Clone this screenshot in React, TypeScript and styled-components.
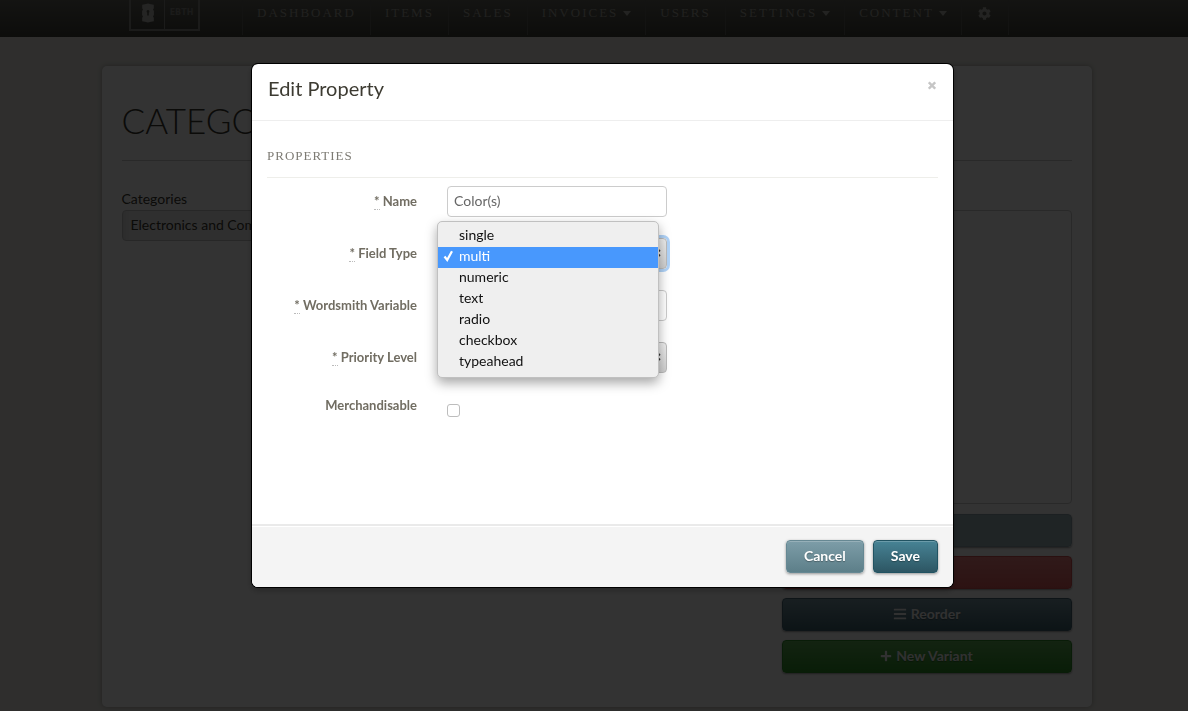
import React from "react";
import styled, { createGlobalStyle, css } from "styled-components";
import { FaBars, FaCog, FaPlus } from "react-icons/fa";

const sans = `Lato, "Open Sans", "Liberation Sans", sans-serif`;
const serif = `"Liberation Serif", "Times New Roman", serif`;

const GlobalStyle = createGlobalStyle`
  *, *::before, *::after { box-sizing: border-box; }
  html, body { margin: 0; height: 100%; }
  body {
    overflow: hidden;
    background: #e8e6df;
    font-family: ${sans};
    font-size: 14px;
    line-height: 20px;
    color: #3a382f;
  }
`;

/* ---------- Top navigation ---------- */

const NavBar = styled.header`
  height: 37px;
  background: linear-gradient(#64645c, #3f3f38);
`;

const NavInner = styled.div`
  display: flex;
  align-items: flex-start;
  max-width: 990px;
  margin: 0 auto;
  padding-left: 30px;
`;

const Logo = styled.a`
  display: flex;
  flex: none;
  width: 71px;
  height: 31px;
  margin-right: 42px;
  border: 2px solid #868682;
  border-top: 0;
  color: #b8b8b4;
  text-decoration: none;
`;

const LogoMark = styled.span`
  display: flex;
  justify-content: center;
  width: 34px;
  padding-top: 3px;
  border-right: 1px solid #868682;
`;

const LogoName = styled.span`
  flex: 1;
  color: #868682;
  text-align: center;
  font: bold 8px/26px "DejaVu Sans", sans-serif;
`;

const NavList = styled.ul`
  display: flex;
  margin: 0;
  padding: 0;
  list-style: none;
`;

const NavItem = styled.li`
  border-left: 1px solid #62625a;
  &:last-child { border-right: 1px solid #62625a; }
`;

const NavLink = styled.a`
  display: flex;
  align-items: center;
  gap: 5px;
  height: 35px;
  padding: 0 14px 9px;
  color: #a4a49c;
  font-family: ${serif};
  font-size: 13px;
  letter-spacing: 2px;
  text-transform: uppercase;
  text-decoration: none;
  white-space: nowrap;
`;

const IconNavLink = styled(NavLink)`
  padding: 0 17px 9px 16px;
`;

const Caret = styled.span`
  border: 4px solid transparent;
  border-top: 5px solid #b0b0a8;
  border-bottom: 0;
`;

/* ---------- Page behind the dialog ---------- */

const Shell = styled.div`
  padding-left: 5px;
`;

const Card = styled.main`
  max-width: 990px;
  height: 641px;
  margin: 29px auto 0;
  padding: 34px 20px 0;
  background: #fff;
  border-radius: 5px;
  box-shadow: 0 0 5px rgba(0, 0, 0, 0.3);
`;

const PageTitle = styled.h1`
  margin: 0;
  padding-bottom: 20px;
  border-bottom: 1px solid #ccc;
  font-size: 35px;
  font-weight: 300;
  line-height: 40px;
  text-transform: uppercase;
`;

const Columns = styled.div`
  display: grid;
  grid-template-columns: 290px 290px;
  justify-content: space-between;
  padding-top: 28px;
`;

const Stack = styled.div`
  display: flex;
  flex-direction: column;
`;

const PageLabel = styled.label`
  height: 21px;
`;

const CategorySelect = styled.select`
  appearance: none;
  height: 31px;
  padding: 0 8px 2px;
  border: 1px solid #c4c4c4;
  border-radius: 4px;
  background: linear-gradient(90deg, #dcdcdc, #ececec 8px);
  color: #3a382f;
  font: 14px/20px ${sans};
`;

const VariantList = styled.ul`
  height: 294px;
  margin: 21px 0 10px;
  padding: 0;
  list-style: none;
  border: 1px solid #ccc;
  border-radius: 4px;
`;

const tones = {
  slate: ["#9cb2ba", "#9cb2ba", "#8ba0a8"],
  red: ["#ee8080", "#dd5c5c", "#d05050"],
  navy: ["#7896a3", "#3f6470", "#456674"],
  green: ["#5fae55", "#2f9128", "#2f8a2c"],
  muted: ["#7d9da8", "#5d7f89", "#668893"],
  teal: ["#478395", "#2d5663", "#215362"],
} as const;

const Button = styled.button<{ $tone: keyof typeof tones; $faded?: boolean }>`
  display: flex;
  align-items: center;
  justify-content: center;
  gap: 4px;
  height: 33px;
  padding: 0 17px 2px;
  border: 1px solid ${(p) => tones[p.$tone][2]};
  border-radius: 4px;
  background: linear-gradient(${(p) => tones[p.$tone][0]}, ${(p) => tones[p.$tone][1]});
  box-shadow: inset 0 1px 0 rgba(255, 255, 255, 0.2), 0 1px 3px rgba(0, 0, 0, 0.4);
  color: #fff;
  font: bold 14px/20px ${sans};
  text-shadow: 0 1px 1px rgba(0, 0, 0, 0.3);
  ${(p) => p.$faded && css`
    margin-bottom: 9px;
    color: #f4f4f4;
    box-shadow: 0 1px 2px rgba(0, 0, 0, 0.4);
  `}
`;

/* ---------- Dialog ---------- */

const Backdrop = styled.div`
  position: fixed;
  inset: 0;
  padding: 64px 0 0 17px;
  background: rgba(0, 0, 0, 0.8);
`;

const Dialog = styled.div`
  display: flex;
  flex-direction: column;
  max-width: 701px;
  margin: 0 auto;
  border-radius: 6px;
  background: #fff;
  box-shadow: 0 0 0 1px #000, 0 3px 7px rgba(0, 0, 0, 0.3);
`;

const DialogHeader = styled.div`
  display: flex;
  align-items: flex-start;
  justify-content: space-between;
  height: 57px;
  padding: 9px 15px 0 16px;
  border-bottom: 1px solid #eee;
`;

const DialogTitle = styled.h2`
  margin: 0;
  color: #3d3b32;
  font-size: 20px;
  font-weight: 400;
  line-height: 30px;
`;

const CloseButton = styled.button`
  display: flex;
  margin-top: 8px;
  padding: 0 2px;
  border: 0;
  background: none;
  color: #c6c6c6;
`;

const DialogBody = styled.div`
  height: 403px;
  padding: 25px 15px 0;
`;

const Fieldset = styled.fieldset`
  margin: 0;
  padding: 0;
  border: 0;
`;

const Legend = styled.legend`
  width: 100%;
  margin-bottom: 8px;
  padding: 0 0 11px;
  border-bottom: 1px solid #eeeeea;
  color: #7d7b74;
  font-family: ${serif};
  font-size: 13px;
  line-height: 20px;
  letter-spacing: 1px;
  text-transform: uppercase;
`;

const FieldRow = styled.div<{ $compact?: boolean }>`
  display: grid;
  grid-template-columns: 150px 220px;
  column-gap: 30px;
  align-items: center;
  height: ${(p) => (p.$compact ? 24 : 30)}px;
  margin-bottom: 22px;
`;

const FieldLabel = styled.label`
  padding-bottom: 2px;
  color: #716d62;
  font-size: 13px;
  font-weight: 700;
  text-align: right;
  white-space: nowrap;
`;

const Required = styled.abbr`
  border-bottom: 1px dotted #bbb;
  text-decoration: none;
`;

const control = css`
  width: 100%;
  height: 31px;
  padding: 0 6px 2px;
  border: 1px solid #ccc;
  border-radius: 4px;
  color: #666;
  font: 14px/20px ${sans};
`;

const TextInput = styled.input`
  ${control}
  background: #fff;
`;

const SelectWrap = styled.div`
  position: relative;
`;

const SelectInput = styled.select<{ $active?: boolean }>`
  ${control}
  display: block;
  appearance: none;
  outline: none;
  border-color: #bbb;
  background: linear-gradient(#eee, #cfcfcf);
  box-shadow: ${(p) => (p.$active ? "0 0 0 3px #b0d3f8" : "none")};
`;

const SelectArrows = styled.svg`
  position: absolute;
  top: 9px;
  right: 6px;
  pointer-events: none;
`;

const CheckInput = styled.input`
  appearance: none;
  width: 13px;
  height: 13px;
  margin: 8px 0 0;
  border: 1px solid #bdbdbd;
  border-radius: 3px;
  background: #fff;
`;

const Menu = styled.ul`
  position: absolute;
  z-index: 1;
  top: -17px;
  left: -10px;
  width: 222px;
  margin: 0;
  padding: 4px 0;
  border: 1px solid #c0c0c0;
  border-radius: 5px;
  background: #efefef;
  box-shadow: 0 5px 12px rgba(0, 0, 0, 0.35);
  list-style: none;
`;

const MenuItem = styled.li<{ $selected: boolean }>`
  display: flex;
  align-items: center;
  height: 21px;
  padding: 0 0 3px 5px;
  background: ${(p) => (p.$selected ? "#4898fd" : "transparent")};
  color: ${(p) => (p.$selected ? "#fff" : "#111")};
  font-size: 14px;
`;

const CheckSlot = styled.span`
  display: flex;
  width: 16px;
`;

const DialogFooter = styled.div`
  display: flex;
  justify-content: flex-end;
  gap: 9px;
  padding: 14px 15px;
  border-top: 2px solid #eaeaea;
  border-radius: 0 0 6px 6px;
  background: #f4f4f4;
  box-shadow: inset 0 1px 0 #fff;
`;

const navItems = [
  { label: "Dashboard" },
  { label: "Items" },
  { label: "Sales" },
  { label: "Invoices", menu: true },
  { label: "Users" },
  { label: "Settings", menu: true },
  { label: "Content", menu: true },
];

const fieldTypes = ["single", "multi", "numeric", "text", "radio", "checkbox", "typeahead"];

function Arrows() {
  return (
    <SelectArrows width="7" height="12" viewBox="0 0 7 12" fill="none" stroke="#333" strokeWidth="1.6" aria-hidden>
      <path d="M1 4.4 3.5 1.6 6 4.4M1 7.6l2.5 2.8L6 7.6" />
    </SelectArrows>
  );
}

function RequiredLabel({ id, text }: { id: string; text: string }) {
  return (
    <FieldLabel htmlFor={id}>
      <Required title="required">*</Required> {text}
    </FieldLabel>
  );
}

export default function App() {
  return (
    <>
      <GlobalStyle />
      <NavBar>
        <NavInner>
          <Logo href="#">
            <LogoMark>
              <svg width="14" height="20" viewBox="0 0 14 20" fill="currentColor" aria-hidden>
                <path
                  fillRule="evenodd"
                  d="M4 1.2 7 .4l3 .8 2.800.6v3.400l-.8 1.300.9 1.500v4l-.9 1.500.8 1.300v3.400L10 18.800l-3 .8-3-.8-2.800-.6v-3.400l.8-1.300-.9-1.500V8L2 6.500l-.8-1.300V1.800zM7 7a1.500 1.500 0 0 0-.8 2.700V12.500h1.600V9.700A1.500 1.500 0 0 0 7 7z"
                />
              </svg>
            </LogoMark>
            <LogoName>EBTH</LogoName>
          </Logo>
          <NavList>
            {navItems.map((item) => (
              <NavItem key={item.label}>
                <NavLink href="#">
                  {item.label}
                  {item.menu && <Caret />}
                </NavLink>
              </NavItem>
            ))}
            <NavItem>
              <IconNavLink href="#" aria-label="Preferences">
                <FaCog size={13} color="#b0b0a8" />
              </IconNavLink>
            </NavItem>
          </NavList>
        </NavInner>
      </NavBar>

      <Shell>
        <Card>
          <PageTitle>Categories</PageTitle>
          <Columns>
            <Stack>
              <PageLabel htmlFor="category">Categories</PageLabel>
              <CategorySelect id="category">
                <option>Electronics and Computers</option>
              </CategorySelect>
            </Stack>
            <Stack>
              <VariantList />
              <Button $tone="slate" $faded>Edit</Button>
              <Button $tone="red" $faded>Delete</Button>
              <Button $tone="navy" $faded><FaBars size={14} /> Reorder</Button>
              <Button $tone="green" $faded><FaPlus size={12} /> New Variant</Button>
            </Stack>
          </Columns>
        </Card>
      </Shell>

      <Backdrop>
        <Dialog role="dialog" aria-modal="true" aria-labelledby="dialog-title">
          <DialogHeader>
            <DialogTitle id="dialog-title">Edit Property</DialogTitle>
            <CloseButton type="button" aria-label="Close">
              <svg width="8" height="9" viewBox="0 0 8 9" stroke="currentColor" strokeWidth="2.4" aria-hidden>
                <path d="M.8 1.300 7.200 7.700M7.200 1.300.8 7.700" />
              </svg>
            </CloseButton>
          </DialogHeader>
          <DialogBody>
            <Fieldset>
              <Legend>Properties</Legend>
              <FieldRow>
                <RequiredLabel id="name" text="Name" />
                <TextInput id="name" defaultValue="Color(s)" />
              </FieldRow>
              <FieldRow>
                <RequiredLabel id="field-type" text="Field Type" />
                <SelectWrap>
                  <SelectInput id="field-type" defaultValue="multi" $active>
                    {fieldTypes.map((type) => (
                      <option key={type}>{type}</option>
                    ))}
                  </SelectInput>
                  <Arrows />
                  <Menu role="listbox" aria-label="Field Type">
                    {fieldTypes.map((type) => (
                      <MenuItem key={type} role="option" aria-selected={type === "multi"} $selected={type === "multi"}>
                        <CheckSlot>
                          {type === "multi" && (
                            <svg width="11" height="12" viewBox="0 0 11 12" fill="none" stroke="#fff" strokeWidth="2.2" aria-hidden>
                              <path d="M1.500 6.500 4.200 10 9 1.200" />
                            </svg>
                          )}
                        </CheckSlot>
                        {type}
                      </MenuItem>
                    ))}
                  </Menu>
                </SelectWrap>
              </FieldRow>
              <FieldRow>
                <RequiredLabel id="wordsmith" text="Wordsmith Variable" />
                <TextInput id="wordsmith" />
              </FieldRow>
              <FieldRow>
                <RequiredLabel id="priority" text="Priority Level" />
                <SelectWrap>
                  <SelectInput id="priority" />
                  <Arrows />
                </SelectWrap>
              </FieldRow>
              <FieldRow $compact>
                <FieldLabel htmlFor="merchandisable">Merchandisable</FieldLabel>
                <CheckInput id="merchandisable" type="checkbox" />
              </FieldRow>
            </Fieldset>
          </DialogBody>
          <DialogFooter>
            <Button type="button" $tone="muted">Cancel</Button>
            <Button type="button" $tone="teal">Save</Button>
          </DialogFooter>
        </Dialog>
      </Backdrop>
    </>
  );
}
